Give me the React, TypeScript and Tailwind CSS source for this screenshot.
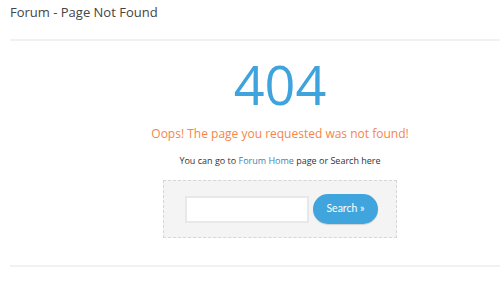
export default function App() {
  return (
    <div className="w-[500px] h-[305px] bg-white overflow-hidden" style={{ fontFamily: '"Open Sans", sans-serif' }}>
      <div className="pl-[10px] pt-[2px] text-[13px] leading-[20px] text-[#444]">Forum - Page Not Found</div>
      <div className="ml-[10px] mt-[17px] h-[2px] bg-[#f1f1f1]" />
      <div className="flex flex-col items-center pl-[60px]">
        <div className="mt-[13px] text-[54px] leading-[60px] text-[#3fa3dd]">404</div>
        <div className="mt-[12px] text-[12px] leading-[16px] text-[#f5854a]">Oops! The page you requested was not found!</div>
        <div className="mt-[13px] text-[9px] leading-[12px] text-[#333]">
          You can go to <span className="text-[#3f7fb0]">Forum Home</span> page or Search here
        </div>
        <div className="mt-[13px] w-[234px] h-[58px] border border-dashed border-[#d6d6d6] bg-[#f4f4f4] flex items-center pl-[21px] gap-[4px]">
          <div className="w-[124px] h-[27px] bg-white border-2 border-[#e8e8e8]" />
          <button className="w-[65px] h-[30px] rounded-full bg-[#40a4dd] text-white text-[10.5px] shadow-[0_1px_1px_rgba(0,0,0,0.15)]" style={{ fontFamily: 'Lato, sans-serif' }}>
            Search »
          </button>
        </div>
      </div>
      <div className="ml-[10px] mt-[27px] h-[2px] bg-[#f1f1f1]" />
    </div>
  );
}
